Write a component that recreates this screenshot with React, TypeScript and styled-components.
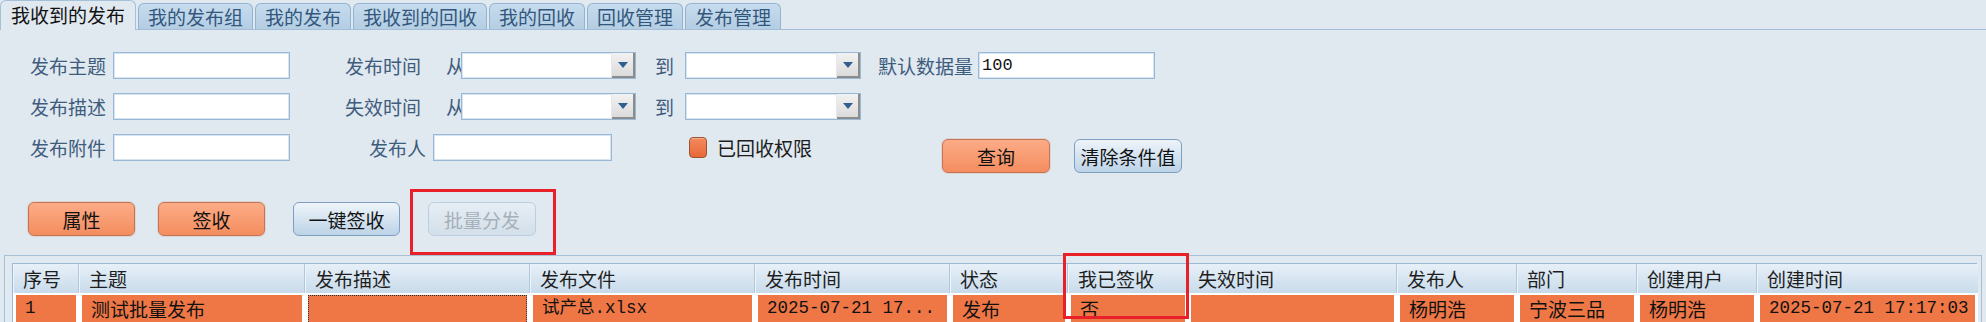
import React from "react";
import styled, { createGlobalStyle, css } from "styled-components";

const GlobalStyle = createGlobalStyle`
  html, body { margin: 0; padding: 0; background: #e0e8f0; }
  body { font-family: "Noto Sans CJK SC", "Liberation Sans", sans-serif; }
  * { box-sizing: border-box; }
`;

const CJK = `"Noto Sans CJK SC", "Liberation Sans", sans-serif`;
const MONO = `"Liberation Mono", "Noto Sans CJK SC", monospace`;

const Page = styled.div`
  position: relative;
  width: 1986px;
  height: 322px;
  overflow: hidden;
  background: #e0e8f0;
`;

/* ---------- Tabs ---------- */
const TabBar = styled.div`
  display: flex;
  align-items: flex-end;
  height: 30px;
  gap: 2px;
  border-bottom: 1px solid #a3bed6;
`;

const Tab = styled.div<{ $active?: boolean }>`
  font-family: ${CJK};
  font-size: 19px;
  white-space: nowrap;
  border: 1px solid #93b3cf;
  border-bottom: none;
  border-radius: 6px 6px 0 0;
  ${(p) =>
    p.$active
      ? css`
          height: 30px;
          margin-bottom: -1px;
          padding: 0 10px;
          line-height: 28px;
          color: #111;
          background: #e0e8f0;
          border-color: #a6c0d8;
        `
      : css`
          height: 26px;
          padding: 0 9px;
          line-height: 25px;
          color: #33577c;
          background: linear-gradient(#c7dcee, #b3cde3);
        `}
`;

/* ---------- Form ---------- */
const Form = styled.div`
  padding-top: 22px;
  display: flex;
  flex-direction: column;
  gap: 14px;
`;

const FormRow = styled.div<{ $top?: boolean }>`
  display: flex;
  align-items: ${(p) => (p.$top ? "flex-start" : "center")};
  min-height: 27px;
`;

const Label = styled.span<{ $ml?: number; $w?: number; $dark?: boolean }>`
  display: inline-block;
  margin-left: ${(p) => p.$ml ?? 0}px;
  width: ${(p) => (p.$w ? `${p.$w}px` : "auto")};
  font-family: ${CJK};
  font-size: 19px;
  line-height: 27px;
  height: 27px;
  color: ${(p) => (p.$dark ? "#1c1c1c" : "#3e5c7c")};
  white-space: nowrap;
`;

const TextBox = styled.div<{ $ml?: number; $w: number }>`
  margin-left: ${(p) => p.$ml ?? 0}px;
  width: ${(p) => p.$w}px;
  height: 27px;
  background: #fff;
  border: 1px solid #98b8d6;
  box-shadow: inset 0 0 0 1px #d6e4f1;
  font-family: ${MONO};
  font-size: 17px;
  line-height: 25px;
  padding-left: 3px;
  color: #111;
`;

const Combo = styled.div<{ $ml?: number; $w: number }>`
  margin-left: ${(p) => p.$ml ?? 0}px;
  width: ${(p) => p.$w}px;
  height: 27px;
  display: flex;
  justify-content: flex-end;
  background: #fff;
  border: 1px solid #98b8d6;
  box-shadow: inset 0 0 0 1px #d6e4f1;
`;

const ComboArrow = styled.div`
  width: 24px;
  height: 100%;
  display: flex;
  align-items: center;
  justify-content: center;
  background: linear-gradient(#f2f2f2, #d9d9d9);
  border-left: 1px solid #e8e8e8;
  box-shadow: inset -2px -2px 0 #8c8c8c;
  &::after {
    content: "";
    margin: -2px 1px 0 0;
    border-left: 5px solid transparent;
    border-right: 5px solid transparent;
    border-top: 6px solid #2f5f90;
  }
`;

const CheckBox = styled.div<{ $ml?: number }>`
  margin-left: ${(p) => p.$ml ?? 0}px;
  margin-top: 3px;
  width: 18px;
  height: 21px;
  border-radius: 4px;
  border: 1px solid #9a5232;
  background: linear-gradient(#f38a5a, #e8683a);
  box-shadow: inset 0 1px 0 rgba(255, 255, 255, 0.35);
`;

type Variant = "orange" | "blue" | "disabled";

const Button = styled.div<{ $variant: Variant; $ml?: number; $w?: number; $mt?: number }>`
  margin-left: ${(p) => p.$ml ?? 0}px;
  margin-top: ${(p) => p.$mt ?? 0}px;
  width: ${(p) => p.$w ?? 108}px;
  height: 34px;
  display: flex;
  align-items: center;
  justify-content: center;
  border-radius: 6px;
  font-family: ${CJK};
  font-size: 19px;
  line-height: 1;
  white-space: nowrap;
  ${(p) =>
    p.$variant === "orange"
      ? css`
          color: #111;
          background: linear-gradient(#fcac87, #f48d5f);
          border: 1px solid #c17555;
          box-shadow: 0 0 0 1px rgba(220, 150, 120, 0.25);
        `
      : p.$variant === "blue"
      ? css`
          color: #111;
          background: linear-gradient(#eef4fa, #bcd3e7);
          border: 1px solid #7e9fc2;
        `
      : css`
          color: #a6b0ba;
          background: linear-gradient(#e6eef5, #d3dfe9);
          border: 1px solid #bccfe0;
        `}
`;

const ActionBar = styled.div`
  display: flex;
  align-items: center;
  margin-top: 29px;
  height: 34px;
`;

/* ---------- Table ---------- */
const Panel = styled.div`
  margin: 19px 4px 0 4px;
  border: 1px solid #a6c0d8;
  border-bottom: none;
  padding: 7px 4px 0 7px;
  height: 80px;
`;

const COLS = [66, 226, 225, 225, 195, 118, 120, 209, 120, 120, 120, 221];

const Table = styled.div`
  border: 1px solid #9dbad4;
  border-bottom: none;
  background: #fff;
`;

const Row = styled.div`
  display: grid;
  grid-template-columns: ${COLS.map((c) => `${c}px`).join(" ")};
`;

const HeadCell = styled.div`
  height: 29px;
  padding-left: 10px;
  font-family: ${CJK};
  font-size: 19px;
  line-height: 29px;
  color: #1e1e1e;
  white-space: nowrap;
  background: linear-gradient(#e7f0f8, #c8dbeb);
  border-right: 1px solid #afc8dd;
  box-shadow: inset 1px 0 0 #eef4fa;
  &:last-child {
    border-right: none;
  }
`;

const CellWrap = styled.div`
  padding: 2px 3px 0 3px;
  background: #fff;
`;

const CellInner = styled.div<{ $focus?: boolean; $mono?: boolean }>`
  height: 29px;
  padding-left: 9px;
  background: #ef7746;
  font-family: ${(p) => (p.$mono ? MONO : CJK)};
  font-size: ${(p) => (p.$mono ? 17.5 : 19)}px;
  line-height: 27px;
  color: #111;
  white-space: nowrap;
  overflow: hidden;
  ${(p) =>
    p.$focus &&
    css`
      outline: 1px dotted #2a2a2a;
      outline-offset: -1px;
    `}
`;

const Mark = styled.div<{ $x: number; $y: number; $w: number; $h: number }>`
  position: absolute;
  left: ${(p) => p.$x}px;
  top: ${(p) => p.$y}px;
  width: ${(p) => p.$w}px;
  height: ${(p) => p.$h}px;
  border: 3px solid #e8202a;
  pointer-events: none;
`;

const tabs = ["我收到的发布", "我的发布组", "我的发布", "我收到的回收", "我的回收", "回收管理", "发布管理"];
const heads = ["序号", "主题", "发布描述", "发布文件", "发布时间", "状态", "我已签收", "失效时间", "发布人", "部门", "创建用户", "创建时间"];
const cells: { t: string; mono?: boolean; focus?: boolean }[] = [
  { t: "1", mono: true },
  { t: "测试批量发布" },
  { t: "", focus: true },
  { t: "试产总.xlsx", mono: true },
  { t: "2025-07-21 17...", mono: true },
  { t: "发布" },
  { t: "否" },
  { t: "" },
  { t: "杨明浩" },
  { t: "宁波三品" },
  { t: "杨明浩" },
  { t: "2025-07-21 17:17:03", mono: true },
];

export default function App() {
  return (
    <Page>
      <GlobalStyle />
      <TabBar>
        {tabs.map((t, i) => (
          <Tab key={t} $active={i === 0}>
            {t}
          </Tab>
        ))}
      </TabBar>

      <Form>
        <FormRow>
          <Label $ml={30} $w={80}>发布主题</Label>
          <TextBox $ml={3} $w={177} />
          <Label $ml={55} $w={79}>发布时间</Label>
          <Label $ml={22} $w={15}>从</Label>
          <Combo $w={175}><ComboArrow /></Combo>
          <Label $ml={19} $w={15}>到</Label>
          <Combo $ml={15} $w={176}><ComboArrow /></Combo>
          <Label $ml={17} $w={97}>默认数据量</Label>
          <TextBox $ml={3} $w={177}>100</TextBox>
        </FormRow>
        <FormRow>
          <Label $ml={30} $w={80}>发布描述</Label>
          <TextBox $ml={3} $w={177} />
          <Label $ml={55} $w={79}>失效时间</Label>
          <Label $ml={22} $w={15}>从</Label>
          <Combo $w={175}><ComboArrow /></Combo>
          <Label $ml={19} $w={15}>到</Label>
          <Combo $ml={15} $w={176}><ComboArrow /></Combo>
        </FormRow>
        <FormRow $top>
          <Label $ml={30} $w={80}>发布附件</Label>
          <TextBox $ml={3} $w={177} />
          <Label $ml={79} $w={57}>发布人</Label>
          <TextBox $ml={7} $w={179} />
          <CheckBox $ml={77} />
          <Label $ml={10} $w={96} $dark>已回收权限</Label>
          <Button $variant="orange" $ml={129} $mt={5}>查询</Button>
          <Button $variant="blue" $ml={24} $mt={5}>清除条件值</Button>
        </FormRow>
      </Form>

      <ActionBar>
        <Button $variant="orange" $ml={28} $w={107}>属性</Button>
        <Button $variant="orange" $ml={23} $w={107}>签收</Button>
        <Button $variant="blue" $ml={28} $w={107}>一键签收</Button>
        <Button $variant="disabled" $ml={28} $w={108}>批量分发</Button>
      </ActionBar>

      <Panel>
        <Table>
          <Row>
            {heads.map((h) => (
              <HeadCell key={h}>{h}</HeadCell>
            ))}
          </Row>
          <Row>
            {cells.map((c, i) => (
              <CellWrap key={i}>
                <CellInner $mono={c.mono} $focus={c.focus}>
                  {c.t}
                </CellInner>
              </CellWrap>
            ))}
          </Row>
        </Table>
      </Panel>

      <Mark $x={410} $y={189} $w={146} $h={66} />
      <Mark $x={1063} $y={253} $w={126} $h={66} />
    </Page>
  );
}
